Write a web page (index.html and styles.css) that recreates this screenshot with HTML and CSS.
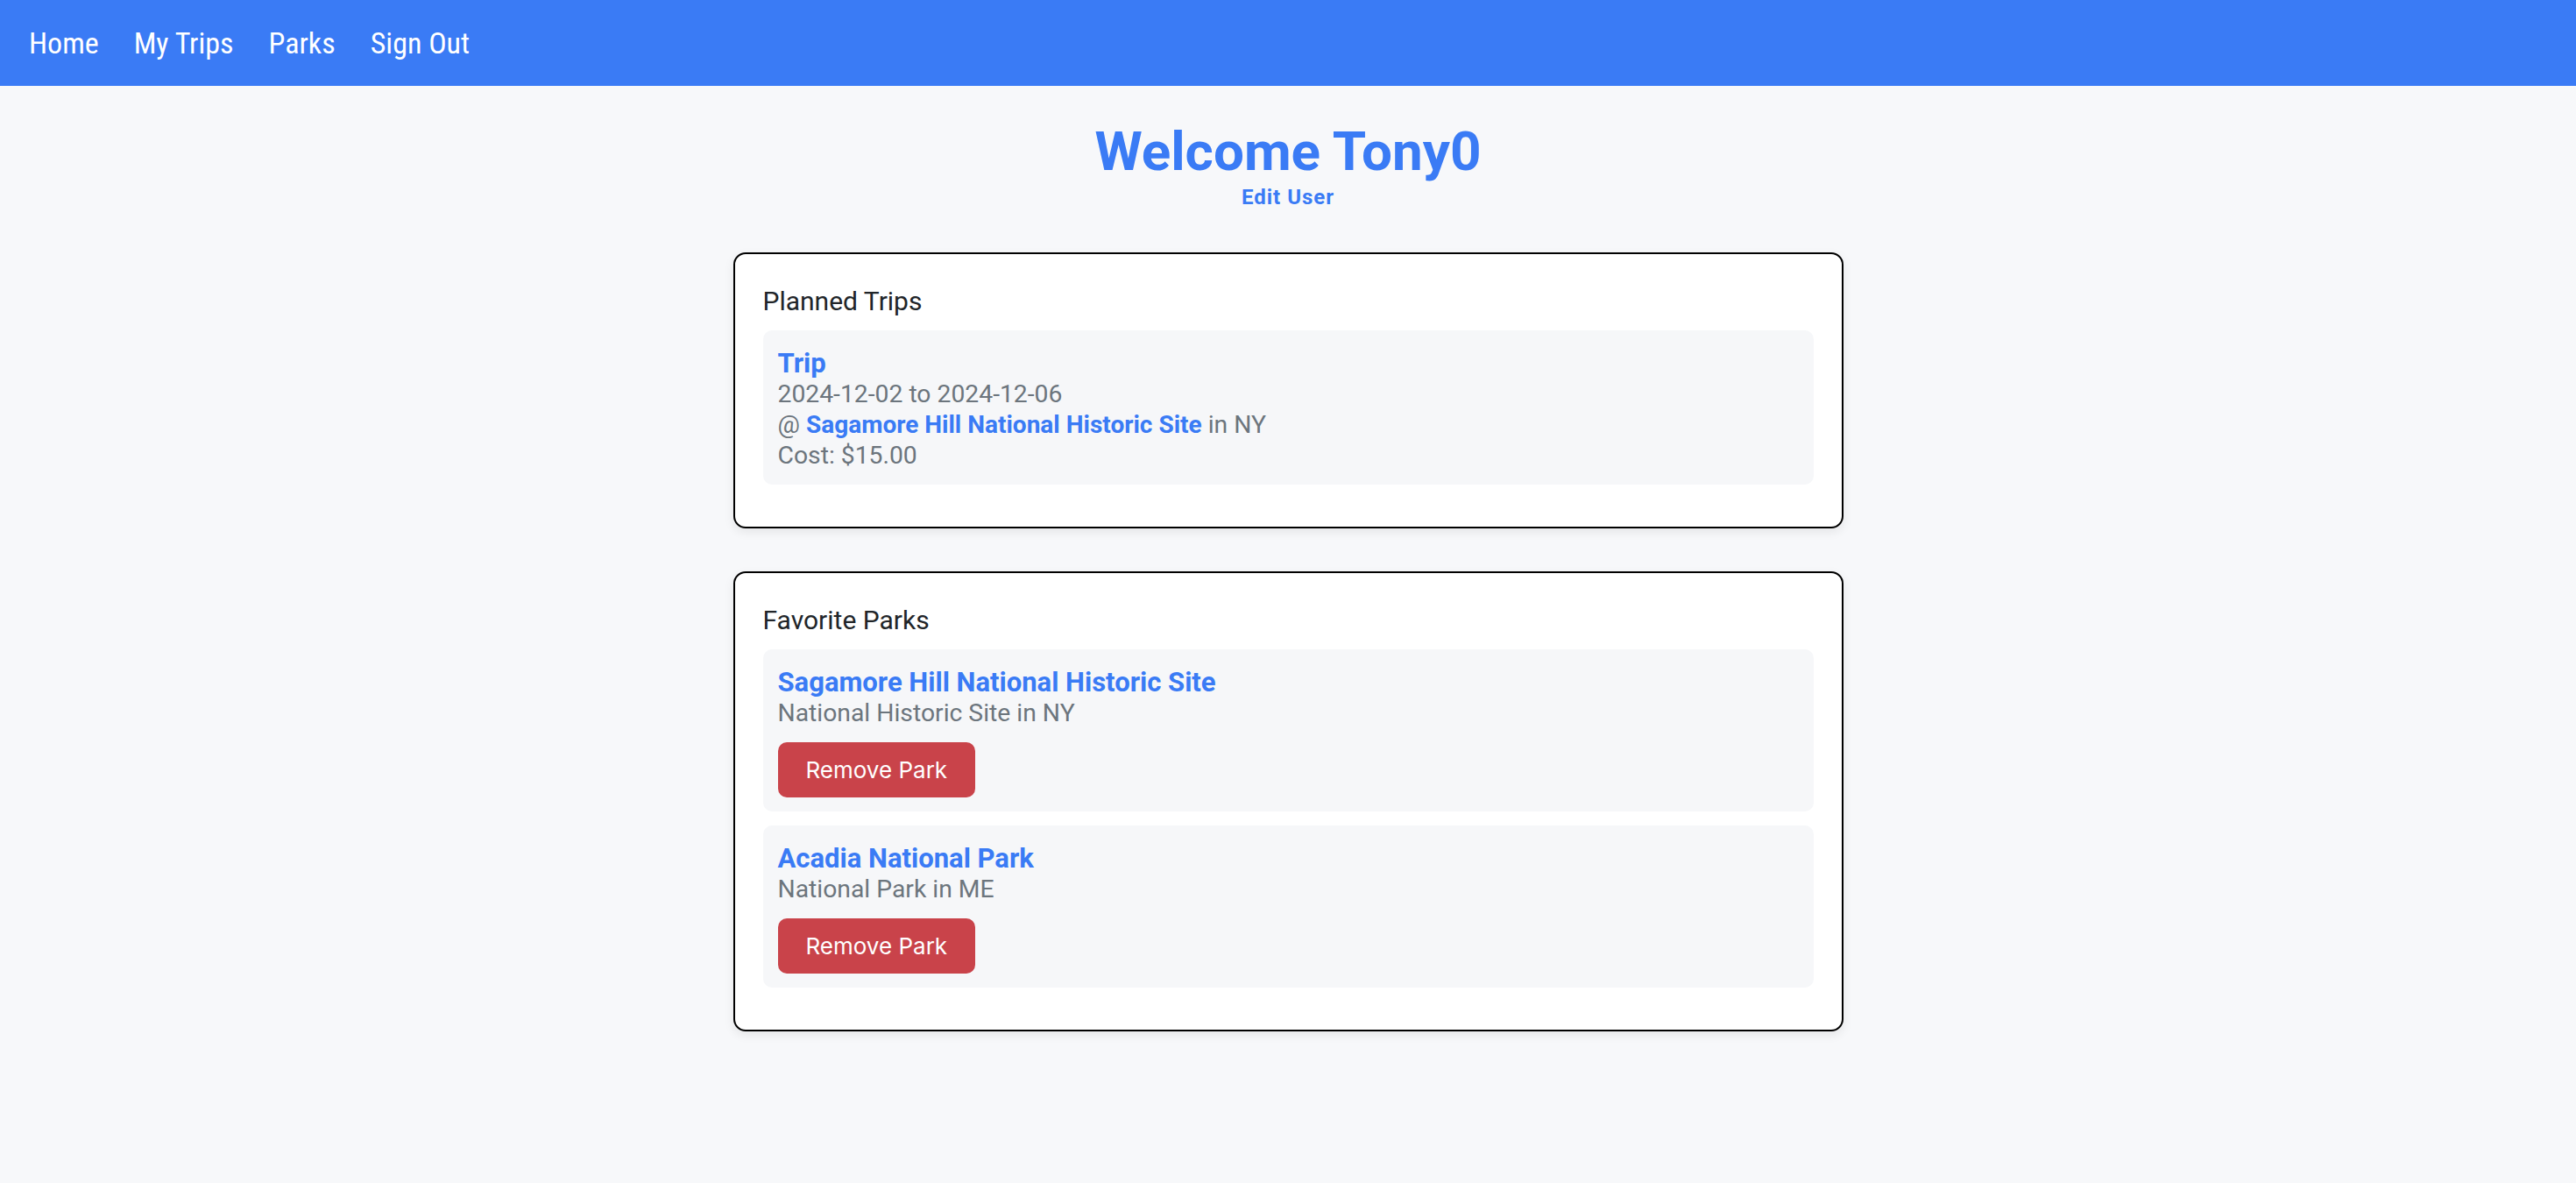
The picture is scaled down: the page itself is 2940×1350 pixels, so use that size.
FILE: index.html
```html
<!DOCTYPE html>
<html lang="en">
<head>
<meta charset="utf-8">
<title>Welcome Tony0</title>
<link rel="stylesheet" href="styles.css">
</head>
<body>
<nav class="topnav">
  <a href="#">Home</a>
  <a href="#">My Trips</a>
  <a href="#">Parks</a>
  <a href="#">Sign Out</a>
</nav>
<main class="page">
  <header class="welcome">
    <h1>Welcome Tony0</h1>
    <a class="edit-link" href="#">Edit User</a>
  </header>
  <section class="card">
    <h2 class="card-title">Planned Trips</h2>
    <div class="item">
      <a class="item-title" href="#">Trip</a>
      <div class="muted">2024-12-02 to 2024-12-06</div>
      <div class="muted">@ <a class="inline-link" href="#">Sagamore Hill National Historic Site</a> in NY</div>
      <div class="muted">Cost: $15.00</div>
    </div>
  </section>
  <section class="card">
    <h2 class="card-title">Favorite Parks</h2>
    <div class="item">
      <a class="item-title" href="#">Sagamore Hill National Historic Site</a>
      <div class="muted">National Historic Site in NY</div>
      <button class="btn-danger" type="button">Remove Park</button>
    </div>
    <div class="item">
      <a class="item-title" href="#">Acadia National Park</a>
      <div class="muted">National Park in ME</div>
      <button class="btn-danger" type="button">Remove Park</button>
    </div>
  </section>
</main>
</body>
</html>
```

FILE: styles.css
```css
body {
  margin: 0;
  background: #f7f8fa;
  font-family: Roboto, "Liberation Sans", sans-serif;
  color: #212529;
}

.topnav {
  height: 98px;
  background: #3a7bf5;
  display: flex;
  align-items: center;
  gap: 40px;
  padding-left: 33px;
}

.topnav a {
  color: #fff;
  text-decoration: none;
  font-size: 34px;
  font-stretch: 75%;
}

.page {
  padding-top: 44px;
}

.welcome {
  text-align: center;
  margin-bottom: 51px;
}

.welcome h1 {
  margin: 0;
  font-size: 62px;
  line-height: 61px;
  font-weight: 700;
  color: #3a7bf5;
}

.edit-link {
  display: inline-block;
  margin-top: 10px;
  font-size: 24px;
  line-height: 24px;
  font-weight: 700;
  letter-spacing: 1px;
  color: #3a7bf5;
  text-decoration: none;
}

.card {
  width: 1267px;
  box-sizing: border-box;
  margin: 0 auto 49px;
  background: #fff;
  border: 2px solid #000;
  border-radius: 14px;
  padding: 32px;
  box-shadow: 0 4px 12px rgba(0, 0, 0, 0.08);
}

.card-title {
  margin: 0 0 11px;
  font-size: 30px;
  line-height: 44px;
  font-weight: 400;
  color: #212529;
}

.item {
  background: #f6f7f9;
  border-radius: 10px;
  padding: 20px 17px 16px;
  margin-bottom: 16px;
}

.item-title {
  display: block;
  font-size: 31px;
  line-height: 35px;
  font-weight: 700;
  color: #3a7bf5;
  text-decoration: none;
}

.muted {
  font-size: 28.3px;
  line-height: 35px;
  color: #6c757d;
}

.inline-link {
  font-size: 28px;
  font-weight: 700;
  line-height: 1;
  color: #3a7bf5;
  text-decoration: none;
}

.btn-danger {
  display: block;
  margin-top: 16px;
  height: 63px;
  padding: 0 32px;
  border: 0;
  border-radius: 10px;
  background: #c9434a;
  color: #fff;
  font-family: Inter, Roboto, sans-serif;
  font-size: 26px;
}
```
